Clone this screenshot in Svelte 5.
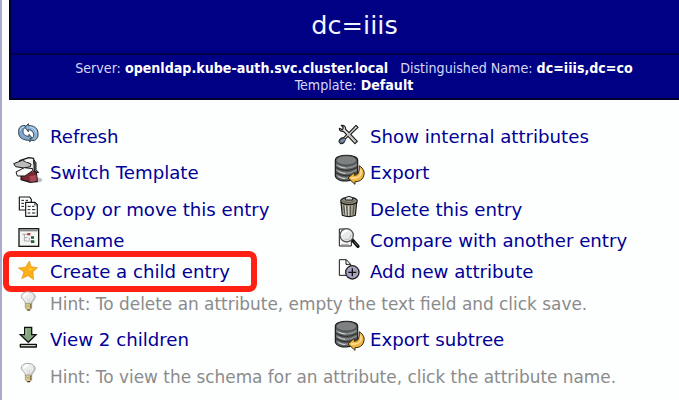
<script>
  const left = [
    { icon: 'refresh', label: 'Refresh', vb: '36 33 96 90', gap: 0 },
    { icon: 'switch', label: 'Switch Template', vb: '36 141 96 90', gap: 6 },
    { icon: 'copy', label: 'Copy or move this entry', vb: '36 12 96 90', gap: 7 },
    { icon: 'rename', label: 'Rename', vb: '36 105 96 90', gap: 1 },
    { icon: 'star', label: 'Create a child entry', vb: '36 198 96 90', gap: 1, marked: true }
  ];
  const right = [
    { icon: 'tools', label: 'Show internal attributes', vb: '36 33 96 90', gap: 0 },
    { icon: 'export', label: 'Export', vb: '36 141 96 90', gap: 6 },
    { icon: 'trash', label: 'Delete this entry', vb: '36 12 96 90', gap: 7 },
    { icon: 'compare', label: 'Compare with another entry', vb: '36 105 96 90', gap: 1 },
    { icon: 'add', label: 'Add new attribute', vb: '36 198 96 90', gap: 1 }
  ];
</script>

{#snippet glyph(name, vb)}
  <svg viewBox={vb} width="32" height="30" fill="none" stroke="#181818" stroke-width="3" stroke-linejoin="round">
    {#if name === 'refresh'}
      <path d="M57 75C52 55 62 44 76 47L80 53C72 52 68 57 69 64C69 73 77 79 87 79V73L97 85 89 96V91C70 91 60 84 57 75Z" fill="#7fa9d0" stroke="#34404b" stroke-width="3" />
      <path d="M113 63C118 83 108 94 94 91L90 85C98 86 102 81 101 74C101 65 93 59 85 59V65L75 52 85 41V47C101 46 110 53 113 63Z" fill="#8ab4d9" stroke="#34404b" stroke-width="3" />
      <path d="M60 61Q63 50 73 51M89 51Q105 53 109 68" stroke="#cbe0f0" stroke-width="3" />
    {:else if name === 'switch'}
      <ellipse cx="105" cy="210" rx="22" ry="8" fill="#888" stroke="none" opacity=".55" />
      <path d="M59 152 86 143 101 145 103 184 88 191 69 179Z" fill="#eee" stroke-width="3.5" />
      <path d="M102 150 108 158V179L116 188 103 186Z" fill="#777" stroke-width="3" />
      <path d="M63 199 96 181 109 187 112 214 91 217 63 209Z" fill="#7d2632" stroke-width="3.5" />
      <path d="M88 199 109 195 110 213 91 216Z" fill="#a84753" stroke="none" />
      <path d="M67 163 100 163 100 184 73 190Z" fill="#e4e6e4" stroke="none" />
      <path d="M41 161 67 151 93 162 91 170 71 174 47 170Z" fill="#b9bcb9" stroke-width="3" />
      <path d="M48 186 73 173 98 176 98 182 75 198 52 198Z" fill="#f7f7f7" stroke-width="3" />
      <path d="M77 154 96 149M58 191 86 181" stroke="#fff" stroke-width="4" />
    {:else if name === 'copy'}
      <path d="M58 21H89L94 28V60H58Z" fill="#fff" stroke-width="3.5" />
      <path d="M64 31H72M77 31H84M64 40H72M64 49H72M77 40H82" stroke-width="3" />
      <path d="M77 37H105L112 44V79H77Z" fill="#fff" stroke-width="3.5" />
      <path d="M104 37V45H112" stroke-width="2" />
      <path d="M83 49H92M96 49H103M83 59H91M96 59H106M83 69H91M96 69H106" stroke-width="3" />
    {:else if name === 'rename'}
      <rect x="57" y="116" width="59" height="53" fill="#f4f6f4" stroke-width="4" stroke-linejoin="miter" />
      <path d="M60 121H113" stroke="#858985" stroke-width="6" />
      <path d="M67 133H83M73 133V153H93M73 143H83M88 143V150" stroke="#858985" stroke-width="2" />
      <path d="M82 129H91V136H82Z" fill="#b23a3c" stroke="none" />
      <path d="M93 139H102V146H93ZM93 151H103V159H93Z" fill="#235b37" stroke="none" />
    {:else if name === 'star'}
      <path d="M88 213 94 230 113 233 99 245 101 269 84 257 65 266 72 246 55 234 77 231Z" fill="#f9af19" stroke="#df9921" stroke-width="2" />
      <path d="M87 221 89 235 103 236 88 243" fill="#ffc938" stroke="none" />
    {:else if name === 'bulb'}
      <path d="M76 53Q75 48 68 43C58 32 68 20 84 20S113 34 101 46Q95 52 95 57H76Z" fill="#eceeed" stroke="#999b98" stroke-width="2.5" />
      <path d="M100 28Q107 39 97 47Q93 50 93 56" stroke="#c2c4c1" stroke-width="4" />
      <path d="M72 35Q75 26 85 25" stroke="#fff" stroke-width="6" />
      <path d="M84 53V43L80 39M89 53V43L93 38" stroke="#cdcbc3" stroke-width="2" />
      <path d="M76 55H95V69L90 76H82L76 69Z" fill="#d8c789" stroke="#8b8877" stroke-width="2" />
      <path d="M92 57V70" stroke="#786f4a" stroke-width="4" />
      <path d="M77 63H94" stroke="#a89d6c" stroke-width="2" />
      <path d="M82 75H90" stroke="#333" stroke-width="3" />
    {:else if name === 'down'}
      <path d="M74 127H95V149H108L85 172 61 149H74Z" fill="#82a57d" stroke="#111" stroke-width="4" stroke-linejoin="miter" />
      <path d="M78 131V151" stroke="#b6cfb2" stroke-width="3" />
      <rect x="61" y="178" width="48" height="8" fill="#c9d8c6" stroke="#111" stroke-width="4" />
    {:else if name === 'tools'}
      <path d="M108 46 114 52 92 73 112 94 105 101 84 79 74 89Q75 100 62 101L57 94Q61 83 71 83L80 74 70 64Q58 65 58 55L67 59 70 53 64 46Q77 45 77 58L87 68Z" fill="#ddd" stroke-width="3.5" />
      <path d="M58 94Q63 83 73 85L77 89Q73 100 61 100Z" fill="#718cac" stroke-width="2" />
      <path d="M84 71 108 96M83 78 106 54" stroke="#999" stroke-width="2" />
    {:else if name === 'export'}
      <path d="M46 151C46 131 113 131 113 151V197C110 217 50 219 46 198Z" fill="#5b5e5e" stroke-width="3.5" />
      <path d="M49 162Q79 181 110 162V167Q79 186 49 167ZM49 178Q79 197 110 178V182Q79 202 49 182ZM50 194Q79 211 108 194V198Q79 216 50 199Z" fill="#8d9191" stroke="none" />
      <path d="M55 168Q65 174 76 174M55 184Q65 190 76 190M55 200Q65 206 76 206" stroke="#d0d2d2" stroke-width="3" />
      <path d="M47 172Q79 191 112 172M47 188Q79 207 112 188" stroke="#2b2d2d" stroke-width="3" />
      <ellipse cx="79" cy="151" rx="31" ry="14" fill="#7d8181" stroke="#3c3f3f" stroke-width="2" />
      <path d="M118 167Q139 181 130 201Q124 215 105 215V223L84 204 103 187V196Q119 197 118 167Z" fill="#f1b742" stroke="#392d16" stroke-width="3" />
      <path d="M122 178Q129 199 106 204L93 204" stroke="#ffe5a6" stroke-width="4" />
    {:else if name === 'trash'}
      <path d="M63 37 67 76Q86 84 106 76L110 37Z" fill="#a5a493" stroke-width="3.5" />
      <path d="M71 46 75 74M80 47 82 77M91 47V77M102 44 99 74" stroke="#5b5a4e" stroke-width="4" />
      <path d="M76 47 78 75M86 47V77" stroke="#e0ded0" stroke-width="3" />
      <ellipse cx="87" cy="33" rx="25" ry="11" fill="#959483" stroke-width="3.5" />
      <path d="M76 23Q86 15 98 23V30H76Z" fill="#ddd" stroke-width="3" />
      <path d="M68 33Q87 43 105 32" stroke="#5d5c51" stroke-width="3" />
    {:else if name === 'compare'}
      <path d="M58 117H83L94 126V168H58Z" fill="#fff" />
      <path d="M63 163H87" stroke="#aaa" stroke-width="3" />
      <path d="M96 149 114 169" stroke="#111" stroke-width="10" stroke-linecap="round" />
      <path d="M102 155 113 167" stroke="#666" stroke-width="3" />
      <circle cx="80" cy="136" r="20" fill="#e7eaea" stroke="#555" stroke-width="4" />
      <path d="M66 135Q69 122 83 123" stroke="#fff" stroke-width="6" />
      <path d="M74 149Q91 151 93 134" stroke="#b7bcbc" stroke-width="3" />
    {:else if name === 'add'}
      <path d="M58 209H79L92 223V256H58Z" fill="#fff" />
      <path d="M78 209V223H92" />
      <circle cx="97" cy="247" r="20" fill="#aaa2c5" stroke="#222" stroke-width="4" />
      <path d="M97 235V259M85 247H109" stroke="#111" stroke-width="4" />
    {/if}
  </svg>
{/snippet}

{#snippet row(item)}
  <div class="row" class:marked={item.marked} style:margin-top="{item.gap}px">
    {@render glyph(item.icon, item.vb)}
    <span class="link">{item.label}</span>
  </div>
{/snippet}

<div class="page">
  <header>
    <h1>dc=iiis</h1>
    <div class="info">
      <div class="server"><span>Server: <b>openldap.kube-auth.svc.cluster.local</b></span><span>Distinguished Name: <b>dc=iiis,dc=co</b></span></div>
      <div>Template: <b>Default</b></div>
    </div>
  </header>
  <main>
    <div class="columns">
      <div class="col">{#each left as item}{@render row(item)}{/each}</div>
      <div class="col">{#each right as item}{@render row(item)}{/each}</div>
    </div>
    <div class="row hint first">
      {@render glyph('bulb', '36 9 96 90')}
      <span>Hint: To delete an attribute, empty the text field and click save.</span>
    </div>
    <div class="columns children">
      <div class="col">{@render row({ icon: 'down', label: 'View 2 children', vb: '36 117 96 90', gap: 0 })}</div>
      <div class="col">{@render row({ icon: 'export', label: 'Export subtree', vb: '36 144 96 90', gap: 0 })}</div>
    </div>
    <div class="row hint second">
      {@render glyph('bulb', '36 13 96 90')}
      <span>Hint: To view the schema for an attribute, click the attribute name.</span>
    </div>
  </main>
</div>

<style>
  :global(body) { background: #fdfefe; }
  .page {
    box-sizing: border-box;
    width: 679px;
    height: 400px;
    overflow: hidden;
    border-left: 2px solid #aaaaca;
    background: #fdfefe;
    font-family: 'DejaVu Sans', sans-serif;
  }
  header {
    box-sizing: border-box;
    height: 100px;
    margin-left: 7px;
    border-left: 2px solid #00002c;
    border-bottom: 2px solid #00002c;
    background: #000084;
    color: #f4f4ff;
    text-align: center;
  }
  h1 {
    box-sizing: border-box;
    height: 55px;
    margin: 0;
    padding-top: 2px;
    padding-left: 19px;
    border-bottom: 2px solid #00004a;
    font-size: 25.6px;
    line-height: 47px;
    font-weight: 400;
  }
  .info {
    padding: 5px 0 0 18px;
    font: 14.12px/17px 'DejaVu Sans Condensed', 'DejaVu Sans', sans-serif;
    color: #d9d9f5;
    white-space: nowrap;
  }
  .server { display: flex; justify-content: center; gap: 12px; }
  b { color: #fff; }
  main { padding: 21px 0 0 10px; }
  .columns { display: flex; }
  .col { width: 320px; }
  .row {
    display: flex;
    align-items: center;
    gap: 6px;
    height: 30px;
    white-space: nowrap;
    position: relative;
  }
  svg { flex: none; overflow: visible; }
  .link { padding-top: 2px; color: #000096; font-size: 18.16px; line-height: 24px; }
  .marked::before {
    content: '';
    position: absolute;
    box-sizing: border-box;
    left: -9px;
    top: -5px;
    width: 254px;
    height: 41px;
    border: 6px solid #ff2114;
    border-radius: 8px;
  }
  .hint { color: #8b8b8b; font-size: 16.92px; }
  .hint span { padding-top: 2px; }
  .first { margin-top: 2px; }
  .children { margin-top: 6px; }
  .second { margin-top: 7px; }
</style>
